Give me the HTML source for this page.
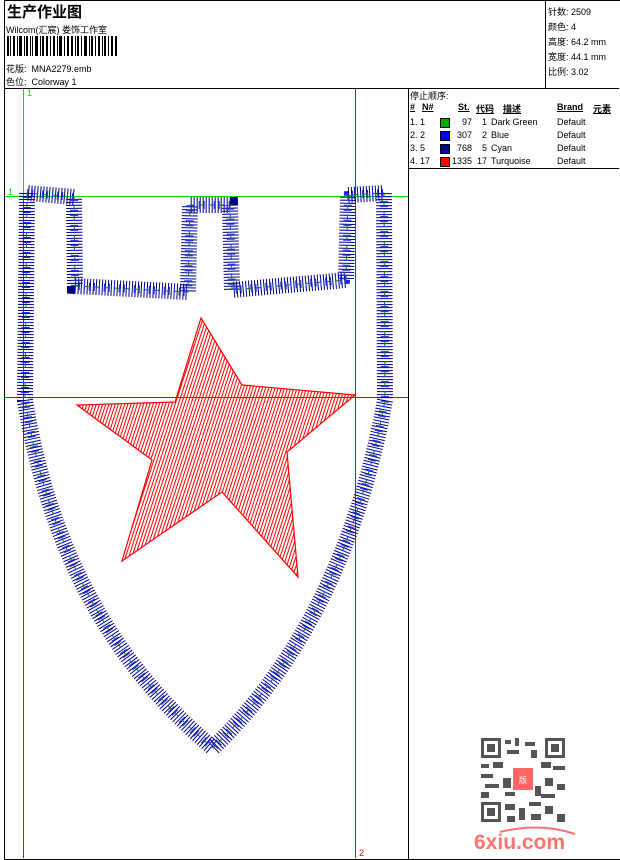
<!DOCTYPE html>
<html><head><meta charset="utf-8"><style>
body{margin:0;width:620px;height:860px;background:#fff;overflow:hidden;font-family:"Liberation Sans","Noto Sans CJK SC",sans-serif;font-size:9px;color:#000;position:relative}
.a{position:absolute}
.u span{text-decoration:underline}
</style></head><body>
<div class="a" style="left:4px;top:0;width:615px;height:858px;border:1px solid #000"></div>
<div class="a" style="left:4px;top:88px;width:615px;border-top:1px solid #000"></div>
<div class="a" style="left:545px;top:0;height:88px;border-left:1px solid #000"></div>
<div class="a" style="left:408px;top:88px;height:771px;border-left:1px solid #000"></div>
<div class="a" style="left:408px;top:168px;width:211px;border-top:1px solid #000"></div>
<div class="a" style="left:7px;top:1px;font-size:15px;font-weight:bold">生产作业图</div>
<div class="a" style="left:6px;top:23px">Wilcom(汇宸) 娄饰工作室</div>
<svg class="a" style="left:7px;top:36px" width="112" height="20"><g fill="#000">
<rect x="0" y="0" width="2" height="20"/><rect x="3" y="0" width="1" height="20"/><rect x="6" y="0" width="2" height="20"/><rect x="10" y="0" width="1" height="20"/><rect x="12" y="0" width="3" height="20"/><rect x="17" y="0" width="1" height="20"/><rect x="19" y="0" width="2" height="20"/><rect x="23" y="0" width="1" height="20"/><rect x="25" y="0" width="1" height="20"/><rect x="28" y="0" width="3" height="20"/><rect x="33" y="0" width="1" height="20"/><rect x="35" y="0" width="2" height="20"/><rect x="39" y="0" width="2" height="20"/><rect x="43" y="0" width="1" height="20"/><rect x="46" y="0" width="2" height="20"/><rect x="50" y="0" width="1" height="20"/><rect x="52" y="0" width="3" height="20"/><rect x="57" y="0" width="1" height="20"/><rect x="60" y="0" width="2" height="20"/><rect x="64" y="0" width="2" height="20"/><rect x="68" y="0" width="1" height="20"/><rect x="70" y="0" width="2" height="20"/><rect x="74" y="0" width="1" height="20"/><rect x="77" y="0" width="3" height="20"/><rect x="82" y="0" width="1" height="20"/><rect x="84" y="0" width="2" height="20"/><rect x="88" y="0" width="1" height="20"/><rect x="91" y="0" width="2" height="20"/><rect x="95" y="0" width="1" height="20"/><rect x="97" y="0" width="2" height="20"/><rect x="101" y="0" width="1" height="20"/><rect x="104" y="0" width="2" height="20"/><rect x="108" y="0" width="2" height="20"/></g></svg>
<div class="a" style="left:6px;top:62px">花版: &nbsp;MNA2279.emb</div>
<div class="a" style="left:6px;top:75px">色位: &nbsp;Colorway 1</div>
<div class="a" style="left:548px;top:5px;line-height:15px">针数: 2509<br>颜色: 4<br>高度: 64.2 mm<br>宽度: 44.1 mm<br>比例: 3.02</div>
<div class="a" style="left:410px;top:89px">停止顺序:</div>
<div class="a u" style="left:410px;top:102px;font-weight:bold;width:210px">
<span class="a" style="left:0">#</span><span class="a" style="left:12px">N#</span><span class="a" style="left:48px">St.</span><span class="a" style="left:66px">代码</span><span class="a" style="left:93px">描述</span><span class="a" style="left:147px">Brand</span><span class="a" style="left:183px">元素</span></div>
<div class="a" style="left:410px;top:116px;line-height:13px;width:210px">
<div style="position:relative;height:13px"><span class="a" style="left:0">1. 1</span><span class="a" style="left:30px;top:2px;width:8px;height:8px;background:#0a0;border:1px solid #000"></span><span class="a" style="left:40px;width:22px;text-align:right">97</span><span class="a" style="left:62px;width:15px;text-align:right">1</span><span class="a" style="left:81px">Dark Green</span><span class="a" style="left:147px">Default</span></div>
<div style="position:relative;height:13px"><span class="a" style="left:0">2. 2</span><span class="a" style="left:30px;top:2px;width:8px;height:8px;background:#00f;border:1px solid #000"></span><span class="a" style="left:40px;width:22px;text-align:right">307</span><span class="a" style="left:62px;width:15px;text-align:right">2</span><span class="a" style="left:81px">Blue</span><span class="a" style="left:147px">Default</span></div>
<div style="position:relative;height:13px"><span class="a" style="left:0">3. 5</span><span class="a" style="left:30px;top:2px;width:8px;height:8px;background:#008;border:1px solid #000"></span><span class="a" style="left:40px;width:22px;text-align:right">768</span><span class="a" style="left:62px;width:15px;text-align:right">5</span><span class="a" style="left:81px">Cyan</span><span class="a" style="left:147px">Default</span></div>
<div style="position:relative;height:13px"><span class="a" style="left:0">4. 17</span><span class="a" style="left:30px;top:2px;width:8px;height:8px;background:#f00;border:1px solid #000"></span><span class="a" style="left:40px;width:22px;text-align:right">1335</span><span class="a" style="left:62px;width:15px;text-align:right">17</span><span class="a" style="left:81px">Turquoise</span><span class="a" style="left:147px">Default</span></div>
</div>
<svg class="a" style="left:0;top:0" width="620" height="860">
<defs><pattern id="h" width="3" height="3" patternUnits="userSpaceOnUse" patternTransform="rotate(18)"><line x1="0.5" y1="0" x2="0.5" y2="3" stroke="#f00" stroke-width="1"/></pattern></defs>
<line x1="23.5" y1="89" x2="23.5" y2="858" stroke="#e00"/>
<line x1="23.5" y1="89" x2="23.5" y2="200" stroke="#0d0"/>
<line x1="355.5" y1="89" x2="355.5" y2="858" stroke="#e00"/>
<line x1="5" y1="397.5" x2="408" y2="397.5" stroke="#e00"/>
<line x1="5" y1="196.5" x2="408" y2="196.5" stroke="#0d0"/>
<text x="27" y="96" fill="#0d0" font-size="9" font-family="Liberation Sans">1</text>
<text x="8" y="195" fill="#0d0" font-size="9" font-family="Liberation Sans">1</text>
<text x="359" y="856" fill="#e00" font-size="9" font-family="Liberation Sans">2</text>
<path d="M27 193 L25 400 Q60 620 213 748 Q345 620 385 400 L384 193 L348 195 L346 280 L232 290 L230 205 L190 205 L188 292 L75 286 L74 197 Z" fill="none" stroke="#008" stroke-width="16" stroke-dasharray="1 2"/>
<path d="M27 193 L25 400 Q60 620 213 748 Q345 620 385 400 L384 193 L348 195 L346 280 L232 290 L230 205 L190 205 L188 292 L75 286 L74 197 Z" fill="none" stroke="#22f" stroke-width="8" stroke-dasharray="1 4" stroke-dashoffset="1"/>
<path d="M27 193 L25 400 Q60 620 213 748 Q345 620 385 400 L384 193 L348 195 L346 280 L232 290 L230 205 L190 205 L188 292 L75 286 L74 197 Z" fill="none" stroke="#080" stroke-width="1" stroke-dasharray="4 6"/>
<path d="M201 318 L242 385 L355 395 L287 452 L298 577 L222 492 L122 561 L152 460 L77 405 L175 402 Z" fill="url(#h)" stroke="#f00" stroke-width="1.2"/>
</svg>
<svg class="a" style="left:481px;top:738px" width="84" height="84">
<rect width="84" height="84" fill="#fff"/>
<g fill="#555">
<rect x="0" y="0" width="20" height="20"/><rect x="64" y="0" width="20" height="20"/><rect x="0" y="64" width="20" height="20"/>
</g>
<g fill="#fff"><rect x="3" y="3" width="14" height="14"/><rect x="67" y="3" width="14" height="14"/><rect x="3" y="67" width="14" height="14"/></g>
<g fill="#555"><rect x="6" y="6" width="8" height="8"/><rect x="70" y="6" width="8" height="8"/><rect x="6" y="70" width="8" height="8"/>
<rect x="24" y="2" width="6" height="4"/><rect x="34" y="0" width="4" height="8"/><rect x="44" y="4" width="10" height="4"/><rect x="26" y="12" width="12" height="4"/><rect x="50" y="12" width="6" height="8"/>
<rect x="0" y="26" width="8" height="4"/><rect x="12" y="24" width="10" height="6"/><rect x="0" y="36" width="12" height="4"/><rect x="4" y="46" width="14" height="4"/><rect x="0" y="54" width="8" height="6"/>
<rect x="60" y="24" width="10" height="6"/><rect x="72" y="28" width="12" height="4"/><rect x="64" y="40" width="8" height="8"/><rect x="76" y="46" width="8" height="6"/><rect x="60" y="56" width="14" height="4"/>
<rect x="24" y="66" width="10" height="6"/><rect x="38" y="70" width="6" height="12"/><rect x="48" y="64" width="12" height="4"/><rect x="64" y="68" width="8" height="8"/><rect x="76" y="76" width="8" height="8"/><rect x="26" y="78" width="8" height="6"/><rect x="50" y="76" width="10" height="6"/>
<rect x="22" y="40" width="8" height="10"/><rect x="24" y="54" width="10" height="4"/><rect x="54" y="48" width="6" height="10"/></g>
<rect x="32" y="30" width="20" height="22" fill="#f66"/>
<text x="42" y="45" fill="#fff" font-size="8" text-anchor="middle" font-family="Noto Sans CJK SC,sans-serif">版</text>
</svg>
<svg class="a" style="left:470px;top:822px" width="120" height="32">
<path d="M30 10 Q70 0 105 12" stroke="#f33" stroke-width="2" fill="none" opacity=".7"/>
<text x="4" y="27" fill="#f44" opacity=".75" font-size="21" font-weight="bold" font-family="Liberation Sans,sans-serif">6xiu.com</text>
</svg>
</body></html>
